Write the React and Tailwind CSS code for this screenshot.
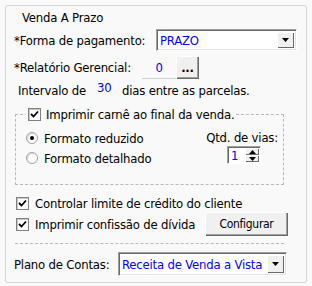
const font = { fontFamily: '"DejaVu Sans Condensed", "DejaVu Sans", sans-serif' };

const Check = ({ checked = true }) => (
  <span className="flex h-[13px] w-[13px] shrink-0 items-center justify-center border border-[#808080] bg-white shadow-[inset_1px_1px_0_#c8c8c8]">
    {checked && (
      <svg width="9" height="9" viewBox="0 0 9 9">
        <path d="M1 4 L3.5 6.5 L8 1.5" stroke="#000" strokeWidth="1.8" fill="none" />
      </svg>
    )}
  </span>
);

const Radio = ({ checked }) => (
  <span className="flex h-[12px] w-[12px] shrink-0 items-center justify-center rounded-full border border-[#a0a0a0] bg-white shadow-[inset_1px_1px_0_#d8d8d8]">
    {checked && <span className="h-[4px] w-[4px] rounded-full bg-black" />}
  </span>
);

const Arrow = ({ up }) => (
  <svg width="7" height="4" viewBox="0 0 7 4">
    <path d={up ? 'M0 4 L3.5 0 L7 4 Z' : 'M0 0 L7 0 L3.5 4 Z'} fill="#000" />
  </svg>
);

const Combo = ({ value, className }) => (
  <div className={`flex h-full items-center border border-t-[#a0a0a0] border-l-[#a0a0a0] border-b-white border-r-white bg-white shadow-[inset_1px_1px_0_#696969,inset_-1px_-1px_0_#e3e3e3] ${className}`}>
    <span className="flex-1 truncate pl-[3px] text-[#0000ff]">{value}</span>
    <span className="mr-[2px] flex h-[calc(100%-4px)] w-[17px] shrink-0 items-center justify-center bg-[#f0f0f0] shadow-[inset_1px_1px_0_#fff,inset_-1px_-1px_0_#696969]">
      <Arrow />
    </span>
  </div>
);

const Button = ({ children, className }) => (
  <button className={`flex shrink-0 items-center justify-center bg-[#f0f0f0] shadow-[inset_1px_1px_0_#fff,inset_-1px_-1px_0_#696969,inset_-2px_-2px_0_#a0a0a0] ${className}`}>
    {children}
  </button>
);

export default function App() {
  return (
    <div className="h-[286px] w-[312px] bg-[#f9f9f9] p-[5px] text-[13px] leading-none tracking-[-0.2px] text-black" style={font}>
      <div className="h-[278px] rounded-[3px] border border-[#d5d5d5]">
        <div className="mt-[3px] flex h-[16px] items-center pl-[16px]">Venda A Prazo</div>

        <div className="mt-[4px] flex h-[22px] items-center pl-[8px]">
          <span className="w-[142px] shrink-0">*Forma de pagamento:</span>
          <Combo value="PRAZO" className="w-[141px]" />
        </div>

        <div className="mt-[5px] flex h-[23px] items-center pl-[8px]">
          <span className="w-[128px] shrink-0">*Relatório Gerencial:</span>
          <span className="flex h-full w-[34px] shrink-0 items-center justify-center border-b border-[#d0d0d0] text-[#0000ff]">0</span>
          <Button className="h-full w-[23px] font-bold">...</Button>
        </div>

        <div className="mt-[3px] flex h-[16px] items-center pl-[12px]">
          <span className="w-[79px] shrink-0">Intervalo de</span>
          <span className="mb-[6px] w-[25px] shrink-0 text-[#0000ff]">30</span>
          <span>dias entre as parcelas.</span>
        </div>

        <fieldset className="ml-[9px] mt-[9px] h-[78px] w-[269px] border border-dashed border-[#b8b8b8]">
          <legend className="ml-[10px] flex h-[14px] items-center gap-[5px] px-[2px]">
            <Check />
            <span>Imprimir carnê ao final da venda.</span>
          </legend>
          <div className="flex pl-[10px] pr-[5px]">
            <div className="flex flex-col">
              <div className="mt-[9px] flex h-[16px] items-center gap-[6px]">
                <Radio checked />
                <span>Formato reduzido</span>
              </div>
              <div className="mt-[4px] flex h-[16px] items-center gap-[6px]">
                <Radio />
                <span>Formato detalhado</span>
              </div>
            </div>
            <div className="ml-auto flex flex-col items-end">
              <span className="mt-[10px]">Qtd. de vias:</span>
              <div className="mr-[17px] mt-[2px] flex h-[18px] w-[34px] items-center border border-t-[#a0a0a0] border-l-[#a0a0a0] border-b-white border-r-white bg-white shadow-[inset_1px_1px_0_#696969]">
                <span className="flex-1 pl-[3px] text-[#0000ff]">1</span>
                <span className="mr-[1px] flex h-[14px] w-[14px] flex-col">
                  <span className="flex h-[7px] items-center justify-center bg-[#f0f0f0] shadow-[inset_1px_1px_0_#fff,inset_-1px_-1px_0_#696969]"><Arrow up /></span>
                  <span className="flex h-[7px] items-center justify-center bg-[#f0f0f0] shadow-[inset_1px_1px_0_#fff,inset_-1px_-1px_0_#696969]"><Arrow /></span>
                </span>
              </div>
            </div>
          </div>
        </fieldset>

        <div className="mt-[10px] flex h-[16px] items-center gap-[6px] pl-[10px]">
          <Check />
          <span>Controlar limite de crédito do cliente</span>
        </div>

        <div className="mt-[1px] flex h-[24px] items-center pl-[10px]">
          <Check />
          <span className="ml-[6px] w-[170px] shrink-0">Imprimir confissão de dívida</span>
          <Button className="h-[24px] w-[83px] text-[12px] tracking-[-0.3px]">Configurar</Button>
        </div>

        <div className="ml-[9px] mt-[7px] w-[269px] border-t border-dashed border-[#b8b8b8]" />

        <div className="mt-[8px] flex h-[24px] items-center pl-[8px]">
          <span className="w-[104px] shrink-0">Plano de Contas:</span>
          <Combo value="Receita de Venda a Vista" className="w-[169px]" />
        </div>
      </div>
    </div>
  );
}
